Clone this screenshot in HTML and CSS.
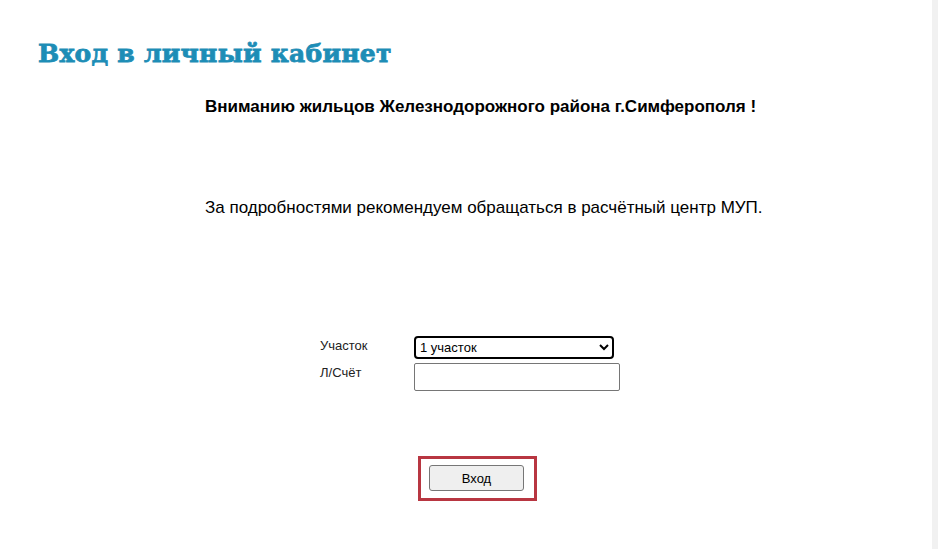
FILE: index.html
```html
<!DOCTYPE html>
<html lang="ru">
<head>
<meta charset="utf-8">
<title>Вход в личный кабинет</title>
<link rel="stylesheet" href="styles.css">
</head>
<body>
<div class="page">
  <main class="main">
    <h1 class="title">Вход в личный кабинет</h1>
    <div class="notice">
      <p class="notice-bold">Вниманию жильцов Железнодорожного района г.Симферополя !</p>
      <p class="notice-text">За подробностями рекомендуем обращаться в расчётный центр МУП.</p>
    </div>
    <form class="form">
      <div class="row">
        <label class="label" for="uch">Участок</label>
        <select id="uch" class="select">
          <option>1 участок</option>
        </select>
      </div>
      <div class="row">
        <label class="label" for="ls">Л/Счёт</label>
        <input id="ls" class="input" type="text">
      </div>
      <div class="submit-wrap">
        <div class="highlight">
          <button type="button" class="button">Вход</button>
        </div>
      </div>
    </form>
  </main>
  <div class="strip"></div>
</div>
</body>
</html>
```
FILE: styles.css
```css
html, body {
  margin: 0;
  padding: 0;
  background: #fff;
}
body {
  font-family: "Liberation Sans", Arial, sans-serif;
  color: #000;
}
.page {
  display: flex;
  height: 549px;
  overflow: hidden;
}
.main {
  flex: 1;
  padding-left: 38px;
}
.strip {
  width: 6px;
  background: #f1f1f1;
}
.title {
  margin: 39px 0 0 0;
  font-family: "DejaVu Serif", serif;
  font-weight: bold;
  font-size: 25px;
  line-height: 29px;
  letter-spacing: 0.25px;
  color: #1d8db6;
  -webkit-text-stroke: 0.8px #1d8db6;
}
.notice {
  padding-left: 167px;
}
.notice-bold {
  margin: 29px 0 0 0;
  font-weight: bold;
  font-size: 17px;
  line-height: 20px;
}
.notice-text {
  margin: 81px 0 0 0;
  font-size: 17px;
  line-height: 20px;
}
.form {
  margin-top: 118px;
  padding-left: 282px;
}
.row {
  display: flex;
  align-items: flex-start;
  margin-bottom: 4px;
}
.label {
  width: 94px;
  font-size: 13px;
  line-height: 16px;
  padding-top: 2px;
  color: #222;
}
.select {
  width: 200px;
  height: 23px;
  box-sizing: border-box;
  border: 2px solid #000;
  border-radius: 4px;
  font-family: "Liberation Sans", Arial, sans-serif;
  font-size: 13px;
  padding: 0;
  background: #fff;
  color: #000;
}
.input {
  width: 206px;
  height: 28px;
  box-sizing: border-box;
  border: 1px solid #767676;
  border-radius: 2px;
  margin: 0;
  padding: 0 2px;
}
.submit-wrap {
  display: flex;
  margin-top: 65px;
  padding-left: 98px;
}
.highlight {
  border: 3px solid #b83641;
  padding: 6px 10px 7px 8px;
}
.button {
  display: block;
  width: 95px;
  height: 26px;
  box-sizing: border-box;
  background: #efefef;
  border: 1px solid #767676;
  border-radius: 3px;
  font-family: "Liberation Sans", Arial, sans-serif;
  font-size: 13px;
  color: #000;
}
```
